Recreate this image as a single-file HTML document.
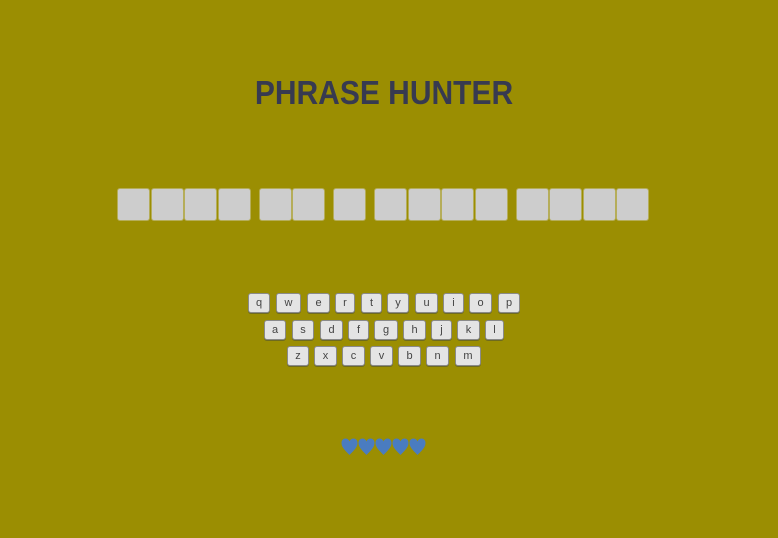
<!DOCTYPE html>
<html><head><style>
html,body{margin:0;padding:0;width:778px;height:538px;background:#9b8e02;overflow:hidden;font-family:"Liberation Sans",sans-serif;position:relative}
h1{position:absolute;top:74px;left:-5px;width:778px;text-align:center;margin:0;font-size:30px;font-weight:bold;color:#373a50;line-height:40px;transform:scaleY(1.12)}
.b{position:absolute;top:188px;width:31px;height:31px;background:#cdcdcd;border:1px solid #b5ad5a;border-radius:3px;box-sizing:content-box}
.k{position:absolute;height:18px;background:#e4e4e4;border:1px solid #8a8a8a;border-radius:3px;font-size:11px;color:#444;text-align:center;line-height:19px;box-shadow:0 1px 0 #6e6a20}
.h{position:absolute;top:438px;width:17px;height:17px}
</style></head><body>
<h1>PHRASE HUNTER</h1>
<div class="b" style="left:117px"></div><div class="b" style="left:151px"></div><div class="b" style="left:184px"></div><div class="b" style="left:218px"></div>
<div class="b" style="left:259px"></div><div class="b" style="left:292px"></div>
<div class="b" style="left:333px"></div>
<div class="b" style="left:374px"></div><div class="b" style="left:408px"></div><div class="b" style="left:441px"></div><div class="b" style="left:475px"></div>
<div class="b" style="left:516px"></div><div class="b" style="left:549px"></div><div class="b" style="left:583px"></div><div class="b" style="left:616px"></div>

<div class="k" style="top:293px;left:248px;width:20px">q</div>
<div class="k" style="top:293px;left:276px;width:23px">w</div>
<div class="k" style="top:293px;left:307px;width:21px">e</div>
<div class="k" style="top:293px;left:335px;width:18px">r</div>
<div class="k" style="top:293px;left:361px;width:19px">t</div>
<div class="k" style="top:293px;left:387px;width:20px">y</div>
<div class="k" style="top:293px;left:415px;width:21px">u</div>
<div class="k" style="top:293px;left:443px;width:19px">i</div>
<div class="k" style="top:293px;left:469px;width:21px">o</div>
<div class="k" style="top:293px;left:498px;width:20px">p</div>

<div class="k" style="top:320px;left:264px;width:20px">a</div>
<div class="k" style="top:320px;left:292px;width:20px">s</div>
<div class="k" style="top:320px;left:320px;width:21px">d</div>
<div class="k" style="top:320px;left:348px;width:19px">f</div>
<div class="k" style="top:320px;left:374px;width:22px">g</div>
<div class="k" style="top:320px;left:403px;width:21px">h</div>
<div class="k" style="top:320px;left:431px;width:19px">j</div>
<div class="k" style="top:320px;left:457px;width:21px">k</div>
<div class="k" style="top:320px;left:485px;width:17px">l</div>

<div class="k" style="top:346px;left:287px;width:20px">z</div>
<div class="k" style="top:346px;left:314px;width:21px">x</div>
<div class="k" style="top:346px;left:342px;width:21px">c</div>
<div class="k" style="top:346px;left:370px;width:21px">v</div>
<div class="k" style="top:346px;left:398px;width:21px">b</div>
<div class="k" style="top:346px;left:426px;width:21px">n</div>
<div class="k" style="top:346px;left:455px;width:24px">m</div>

<svg class="h" style="left:341px" viewBox="0 0 17 17"><path d="M8.5 17 C6 14 0.5 10 0.5 5 C0.5 2 2.5 0.5 4.5 0.5 C6.5 0.5 8 2 8.5 3.5 C9 2 10.5 0.5 12.5 0.5 C14.5 0.5 16.5 2 16.5 5 C16.5 10 11 14 8.5 17Z" fill="#4a7cc0"/></svg>
<svg class="h" style="left:358px" viewBox="0 0 17 17"><path d="M8.5 17 C6 14 0.5 10 0.5 5 C0.5 2 2.5 0.5 4.5 0.5 C6.5 0.5 8 2 8.5 3.5 C9 2 10.5 0.5 12.5 0.5 C14.5 0.5 16.5 2 16.5 5 C16.5 10 11 14 8.5 17Z" fill="#4a7cc0"/></svg>
<svg class="h" style="left:375px" viewBox="0 0 17 17"><path d="M8.5 17 C6 14 0.5 10 0.5 5 C0.5 2 2.5 0.5 4.5 0.5 C6.5 0.5 8 2 8.5 3.5 C9 2 10.5 0.5 12.5 0.5 C14.5 0.5 16.5 2 16.5 5 C16.5 10 11 14 8.5 17Z" fill="#4a7cc0"/></svg>
<svg class="h" style="left:392px" viewBox="0 0 17 17"><path d="M8.5 17 C6 14 0.5 10 0.5 5 C0.5 2 2.5 0.5 4.5 0.5 C6.5 0.5 8 2 8.5 3.5 C9 2 10.5 0.5 12.5 0.5 C14.5 0.5 16.5 2 16.5 5 C16.5 10 11 14 8.5 17Z" fill="#4a7cc0"/></svg>
<svg class="h" style="left:409px" viewBox="0 0 17 17"><path d="M8.5 17 C6 14 0.5 10 0.5 5 C0.5 2 2.5 0.5 4.5 0.5 C6.5 0.5 8 2 8.5 3.5 C9 2 10.5 0.5 12.5 0.5 C14.5 0.5 16.5 2 16.5 5 C16.5 10 11 14 8.5 17Z" fill="#4a7cc0"/></svg>
</body></html>
